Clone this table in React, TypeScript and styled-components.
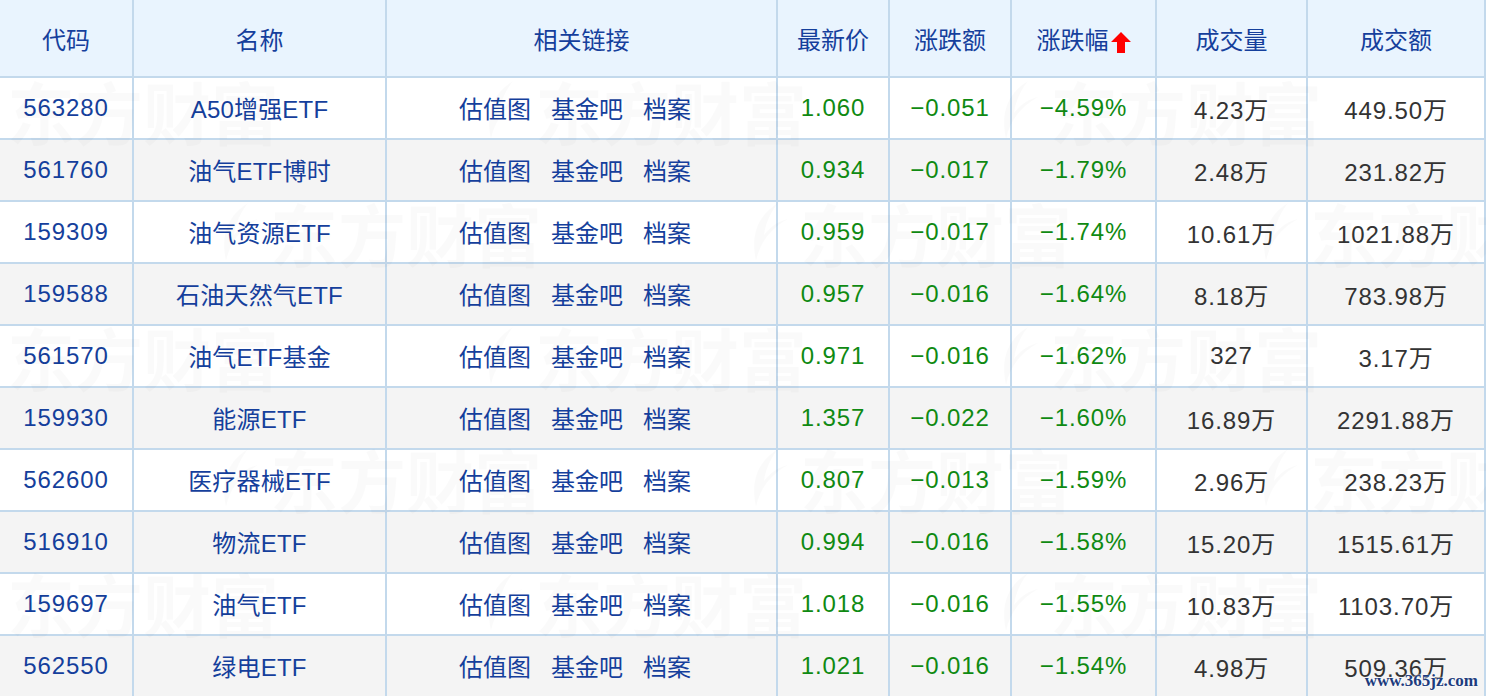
import styled, { createGlobalStyle } from 'styled-components';

const GlobalStyle = createGlobalStyle`
  html, body {
    margin: 0;
    padding: 0;
    background: #fff;
    overflow: hidden;
  }
  body {
    font-family: "Liberation Sans", "Noto Sans CJK SC", sans-serif;
  }
`;

const COLUMNS = '134px 253px 391px 112px 122px 145px 151px 178px';

const Page = styled.div`
  position: relative;
  width: 1486px;
  height: 696px;
  overflow: hidden;
`;

const Table = styled.div`
  display: flex;
  flex-direction: column;
  width: 1486px;
`;

const Row = styled.div<{ $head?: boolean; $alt?: boolean }>`
  display: grid;
  grid-template-columns: ${COLUMNS};
  height: ${props => props.$head ? '78px' : '62px'};
  background-color: ${props => props.$head ? '#e9f4fe' : props.$alt ? '#f4f4f4' : '#ffffff'};
`;

const Cell = styled.div<{ $tone?: 'link' | 'down' | 'plain' }>`
  box-sizing: border-box;
  display: flex;
  align-items: center;
  justify-content: center;
  border-right: 2px solid #c3d9ec;
  border-bottom: 2px solid #c3d9ec;
  font-size: 24px;
  letter-spacing: 0.9px;
  white-space: nowrap;
  color: ${props => props.$tone === 'down' ? '#0f8a12' : props.$tone === 'plain' ? '#333333' : '#153f9c'};
`;

const NameCell = styled(Cell)`
  letter-spacing: 0.2px;
  padding-bottom: 2px;
`;

const HeadCell = styled(Cell)`
  color: #153f9c;
  letter-spacing: 0;
`;

const Links = styled(Cell)`
  gap: 20px;
  padding-right: 13px;
  padding-bottom: 2px;
  letter-spacing: 0;
`;

const SortArrow = styled.svg`
  width: 20px;
  height: 22px;
  margin-top: 8px;
  margin-left: 2px;
`;

const Body = styled.div`
  position: relative;
`;

const Watermarks = styled.div`
  position: absolute;
  inset: 0;
  pointer-events: none;
  overflow: hidden;
`;

const Mark = styled.div<{ $x: number; $y: number }>`
  position: absolute;
  left: ${props => props.$x}px;
  top: ${props => props.$y}px;
  display: flex;
  align-items: center;
  gap: 10px;
  white-space: nowrap;
  font-family: "Noto Sans CJK SC", sans-serif;
  font-weight: 700;
  font-size: 68px;
  line-height: 62px;
  color: rgba(0, 0, 0, 0.019);
`;

const MarkLogo = styled.svg`
  width: 42px;
  height: 60px;
  flex-shrink: 0;
  fill: rgba(0, 0, 0, 0.019);
`;

const Stamp = styled.div`
  position: absolute;
  right: 8px;
  bottom: 5px;
  font-family: "Liberation Serif", serif;
  font-weight: 700;
  font-size: 17px;
  color: #1d3c7d;
  text-shadow: 0 0 2px #fff, 0 0 2px #fff;
`;

interface IFund {
  code: string;
  name: string;
  price: string;
  change: string;
  pct: string;
  volume: string;
  amount: string;
}

const funds: IFund[] = [
  { code: '563280', name: 'A50增强ETF', price: '1.060', change: '−0.051', pct: '−4.59%', volume: '4.23万', amount: '449.50万' },
  { code: '561760', name: '油气ETF博时', price: '0.934', change: '−0.017', pct: '−1.79%', volume: '2.48万', amount: '231.82万' },
  { code: '159309', name: '油气资源ETF', price: '0.959', change: '−0.017', pct: '−1.74%', volume: '10.61万', amount: '1021.88万' },
  { code: '159588', name: '石油天然气ETF', price: '0.957', change: '−0.016', pct: '−1.64%', volume: '8.18万', amount: '783.98万' },
  { code: '561570', name: '油气ETF基金', price: '0.971', change: '−0.016', pct: '−1.62%', volume: '327', amount: '3.17万' },
  { code: '159930', name: '能源ETF', price: '1.357', change: '−0.022', pct: '−1.60%', volume: '16.89万', amount: '2291.88万' },
  { code: '562600', name: '医疗器械ETF', price: '0.807', change: '−0.013', pct: '−1.59%', volume: '2.96万', amount: '238.23万' },
  { code: '516910', name: '物流ETF', price: '0.994', change: '−0.016', pct: '−1.58%', volume: '15.20万', amount: '1515.61万' },
  { code: '159697', name: '油气ETF', price: '1.018', change: '−0.016', pct: '−1.55%', volume: '10.83万', amount: '1103.70万' },
  { code: '562550', name: '绿电ETF', price: '1.021', change: '−0.016', pct: '−1.54%', volume: '4.98万', amount: '509.36万' },
];

// faint brand watermark tiles, staggered every other band
const marks = [
  { x: -45, y: 2 }, { x: 483, y: 2 }, { x: 998, y: 2 },
  { x: 218, y: 124 }, { x: 748, y: 124 }, { x: 1258, y: 124 },
  { x: -45, y: 248 }, { x: 483, y: 248 }, { x: 998, y: 248 },
  { x: 218, y: 370 }, { x: 748, y: 370 }, { x: 1258, y: 370 },
  { x: -45, y: 494 }, { x: 483, y: 494 }, { x: 998, y: 494 },
];

function App() {
  return (
    <>
      <GlobalStyle />
      <Page>
        <Table>
          <Row $head>
            <HeadCell>代码</HeadCell>
            <HeadCell>名称</HeadCell>
            <HeadCell>相关链接</HeadCell>
            <HeadCell>最新价</HeadCell>
            <HeadCell>涨跌额</HeadCell>
            <HeadCell>
              涨跌幅
              <SortArrow viewBox="0 0 20 22">
                <path d="M10 1 L20 11 L14 11 L14 22 L6 22 L6 11 L0 11 Z" fill="#f00" />
              </SortArrow>
            </HeadCell>
            <HeadCell>成交量</HeadCell>
            <HeadCell>成交额</HeadCell>
          </Row>
          <Body>
            {funds.map((fund, index) => (
              <Row key={fund.code} $alt={index % 2 === 1}>
                <Cell>{fund.code}</Cell>
                <NameCell>{fund.name}</NameCell>
                <Links $tone="link">
                  <span>估值图</span>
                  <span>基金吧</span>
                  <span>档案</span>
                </Links>
                <Cell $tone="down">{fund.price}</Cell>
                <Cell $tone="down">{fund.change}</Cell>
                <Cell $tone="down">{fund.pct}</Cell>
                <Cell $tone="plain">{fund.volume}</Cell>
                <Cell $tone="plain">{fund.amount}</Cell>
              </Row>
            ))}
            <Watermarks>
              {marks.map((m, i) => (
                <Mark key={i} $x={m.x} $y={m.y}>
                  <MarkLogo viewBox="0 0 42 60">
                    <path d="M30 0 C10 12 2 32 8 58 C12 40 22 26 40 16 C30 18 22 24 16 32 C18 18 24 8 30 0 Z" />
                  </MarkLogo>
                  <span>东方财富</span>
                </Mark>
              ))}
            </Watermarks>
          </Body>
        </Table>
        <Stamp>www.365jz.com</Stamp>
      </Page>
    </>
  );
}

export default App;
